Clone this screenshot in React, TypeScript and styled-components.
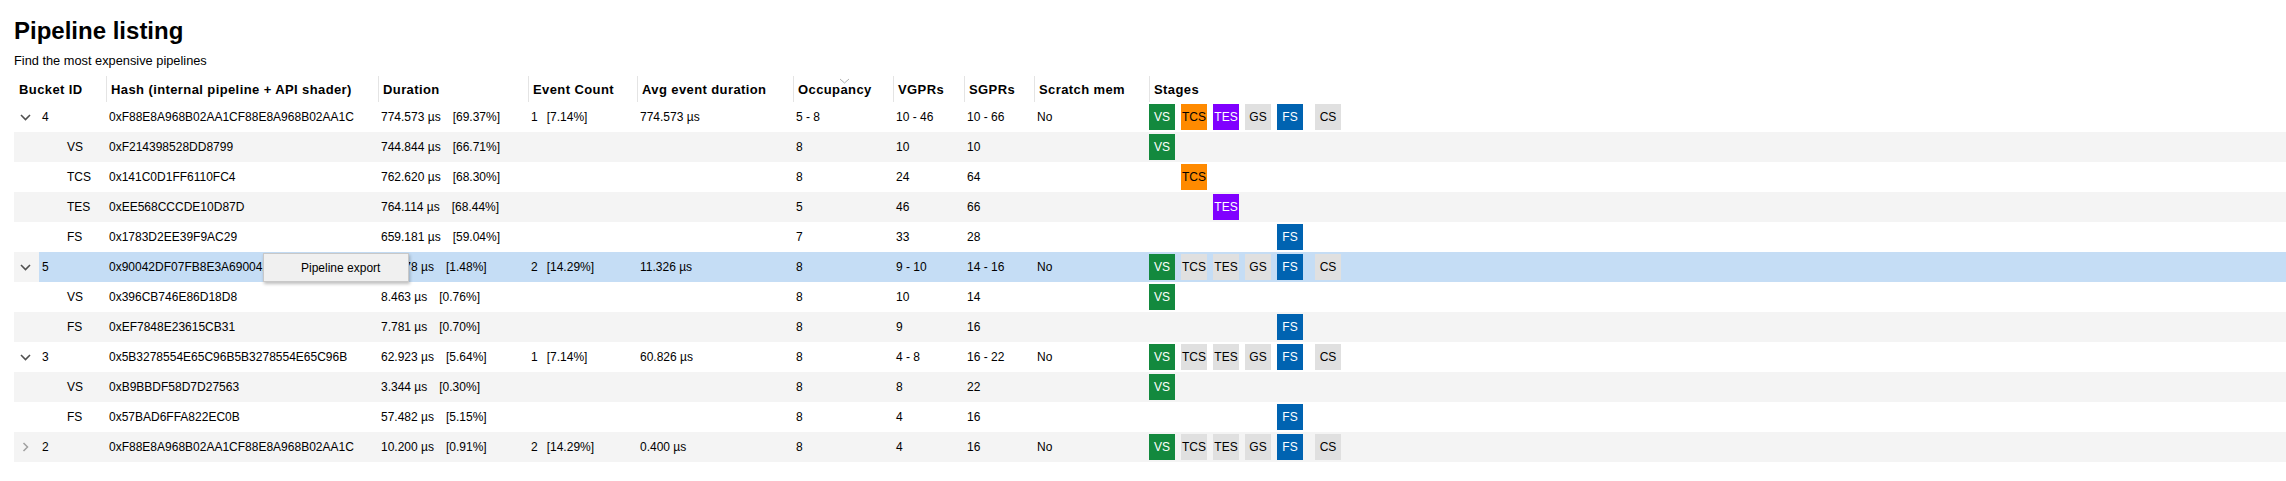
import React from "react";
import styled, { createGlobalStyle } from "styled-components";

const GlobalStyle = createGlobalStyle`
  html, body { margin: 0; padding: 0; background: #ffffff; }
  body { font-family: "Liberation Sans", Arial, sans-serif; color: #000; }
`;

const COLS = "92px 272px 150px 109px 156px 100px 71px 70px 115px 1fr";

const Page = styled.div`
  padding: 17px 0 0 14px;
  width: 2272px;
`;

const Title = styled.h1`
  margin: 0;
  font-size: 24px;
  line-height: 28px;
  font-weight: 700;
`;

const Subtitle = styled.p`
  margin: 8px 0 0 0;
  font-size: 12.8px;
  line-height: 16px;
`;

const Table = styled.div`
  margin-top: 7px;
  display: flex;
  flex-direction: column;
`;

const HeaderRow = styled.div`
  display: grid;
  grid-template-columns: ${COLS};
  height: 26px;
`;

const HeaderCell = styled.div<{ $first?: boolean }>`
  position: relative;
  display: flex;
  align-items: center;
  font-size: 13px;
  letter-spacing: 0.4px;
  font-weight: 700;
  padding-left: ${(p) => (p.$first ? "5px" : "4px")};
  border-left: ${(p) => (p.$first ? "none" : "1px solid #e4e4e4")};
  white-space: nowrap;
`;

const SortMark = styled.svg`
  position: absolute;
  left: 45px;
  top: 2px;
`;

const Row = styled.div<{ $alt: boolean }>`
  position: relative;
  display: grid;
  grid-template-columns: ${COLS};
  height: 30px;
  background: ${(p) => (p.$alt ? "#f4f4f4" : "#ffffff")};
`;

const SelectBand = styled.div`
  position: absolute;
  left: 25px;
  top: 0;
  right: 0;
  bottom: 0;
  background: #c5ddf5;
`;

const Cell = styled.div`
  position: relative;
  display: flex;
  align-items: center;
  padding-left: 3px;
  font-size: 12px;
  white-space: nowrap;
`;

const BucketCell = styled.div`
  position: relative;
  display: flex;
  align-items: center;
  font-size: 12px;
`;

const ArrowBox = styled.div`
  width: 11px;
  margin-left: 6px;
  display: flex;
  align-items: center;
  justify-content: center;
`;

const BucketNum = styled.span`
  margin-left: 11px;
`;

const ChildLabel = styled.span`
  margin-left: 53px;
`;

const Pct = styled.span<{ $gap: number }>`
  margin-left: ${(p) => p.$gap}px;
`;

const StagesCell = styled.div`
  position: relative;
  display: flex;
  align-items: center;
  gap: 6px;
`;

type StageKind = "vs" | "tcs" | "tes" | "fs" | "off" | "none";

const stageColors: Record<StageKind, { bg: string; fg: string }> = {
  vs: { bg: "#13893e", fg: "#ffffff" },
  tcs: { bg: "#ff8a00", fg: "#000000" },
  tes: { bg: "#8000ff", fg: "#ffffff" },
  fs: { bg: "#0063b1", fg: "#ffffff" },
  off: { bg: "#e0e0e0", fg: "#000000" },
  none: { bg: "transparent", fg: "transparent" },
};

const Badge = styled.div<{ $kind: StageKind; $extra?: boolean }>`
  width: 26px;
  height: 26px;
  display: flex;
  align-items: center;
  justify-content: center;
  font-size: 12px;
  background: ${(p) => stageColors[p.$kind].bg};
  color: ${(p) => stageColors[p.$kind].fg};
  visibility: ${(p) => (p.$kind === "none" ? "hidden" : "visible")};
  margin-left: ${(p) => (p.$extra ? "6px" : "0")};
`;

const Popup = styled.div`
  position: absolute;
  left: 249px;
  top: 1px;
  width: 146px;
  height: 29px;
  box-sizing: border-box;
  background: #f0f0f0;
  border: 1px solid #c8c8c8;
  box-shadow: 1px 2px 3px rgba(0, 0, 0, 0.25);
  display: flex;
  align-items: center;
  padding-left: 37px;
  font-size: 12px;
  z-index: 2;
`;

const STAGE_NAMES = ["VS", "TCS", "TES", "GS", "FS", "CS"];

type RowData = {
  bucket?: string;
  expanded?: boolean;
  child?: string;
  hash: string;
  dur: string;
  pct: string;
  evt?: string;
  evtPct?: string;
  avg?: string;
  occ: string;
  vgpr: string;
  sgpr: string;
  scratch?: string;
  stages: StageKind[];
  selected?: boolean;
};

const rows: RowData[] = [
  {
    bucket: "4", expanded: true, hash: "0xF88E8A968B02AA1CF88E8A968B02AA1C", dur: "774.573 µs", pct: "[69.37%]",
    evt: "1", evtPct: "[7.14%]", avg: "774.573 µs", occ: "5 - 8", vgpr: "10 - 46", sgpr: "10 - 66", scratch: "No",
    stages: ["vs", "tcs", "tes", "off", "fs", "off"],
  },
  { child: "VS", hash: "0xF214398528DD8799", dur: "744.844 µs", pct: "[66.71%]", occ: "8", vgpr: "10", sgpr: "10", stages: ["vs", "none", "none", "none", "none", "none"] },
  { child: "TCS", hash: "0x141C0D1FF6110FC4", dur: "762.620 µs", pct: "[68.30%]", occ: "8", vgpr: "24", sgpr: "64", stages: ["none", "tcs", "none", "none", "none", "none"] },
  { child: "TES", hash: "0xEE568CCCDE10D87D", dur: "764.114 µs", pct: "[68.44%]", occ: "5", vgpr: "46", sgpr: "66", stages: ["none", "none", "tes", "none", "none", "none"] },
  { child: "FS", hash: "0x1783D2EE39F9AC29", dur: "659.181 µs", pct: "[59.04%]", occ: "7", vgpr: "33", sgpr: "28", stages: ["none", "none", "none", "none", "fs", "none"] },
  {
    bucket: "5", expanded: true, selected: true, hash: "0x90042DF07FB8E3A690042DF07FB8E3A6", dur: "16.578 µs", pct: "[1.48%]",
    evt: "2", evtPct: "[14.29%]", avg: "11.326 µs", occ: "8", vgpr: "9 - 10", sgpr: "14 - 16", scratch: "No",
    stages: ["vs", "off", "off", "off", "fs", "off"],
  },
  { child: "VS", hash: "0x396CB746E86D18D8", dur: "8.463 µs", pct: "[0.76%]", occ: "8", vgpr: "10", sgpr: "14", stages: ["vs", "none", "none", "none", "none", "none"] },
  { child: "FS", hash: "0xEF7848E23615CB31", dur: "7.781 µs", pct: "[0.70%]", occ: "8", vgpr: "9", sgpr: "16", stages: ["none", "none", "none", "none", "fs", "none"] },
  {
    bucket: "3", expanded: true, hash: "0x5B3278554E65C96B5B3278554E65C96B", dur: "62.923 µs", pct: "[5.64%]",
    evt: "1", evtPct: "[7.14%]", avg: "60.826 µs", occ: "8", vgpr: "4 - 8", sgpr: "16 - 22", scratch: "No",
    stages: ["vs", "off", "off", "off", "fs", "off"],
  },
  { child: "VS", hash: "0xB9BBDF58D7D27563", dur: "3.344 µs", pct: "[0.30%]", occ: "8", vgpr: "8", sgpr: "22", stages: ["vs", "none", "none", "none", "none", "none"] },
  { child: "FS", hash: "0x57BAD6FFA822EC0B", dur: "57.482 µs", pct: "[5.15%]", occ: "8", vgpr: "4", sgpr: "16", stages: ["none", "none", "none", "none", "fs", "none"] },
  {
    bucket: "2", expanded: false, hash: "0xF88E8A968B02AA1CF88E8A968B02AA1C", dur: "10.200 µs", pct: "[0.91%]",
    evt: "2", evtPct: "[14.29%]", avg: "0.400 µs", occ: "8", vgpr: "4", sgpr: "16", scratch: "No",
    stages: ["vs", "off", "off", "off", "fs", "off"],
  },
];

const ChevronDown = () => (
  <svg width="11" height="7" viewBox="0 0 11 7">
    <path d="M1 1 L5.5 5.5 L10 1" fill="none" stroke="#505050" strokeWidth="1.6" />
  </svg>
);

const ChevronRight = () => (
  <svg width="7" height="10" viewBox="0 0 7 10">
    <path d="M1.5 1 L5.5 5 L1.5 9" fill="none" stroke="#a0a0a0" strokeWidth="1.5" />
  </svg>
);

const headers = [
  "Bucket ID",
  "Hash (internal pipeline + API shader)",
  "Duration",
  "Event Count",
  "Avg event duration",
  "Occupancy",
  "VGPRs",
  "SGPRs",
  "Scratch mem",
  "Stages",
];

export default function App() {
  return (
    <>
      <GlobalStyle />
      <Page>
        <Title>Pipeline listing</Title>
        <Subtitle>Find the most expensive pipelines</Subtitle>
        <Table>
          <HeaderRow>
            {headers.map((h, i) => (
              <HeaderCell key={h} $first={i === 0}>
                {h}
                {h === "Occupancy" && (
                  <SortMark width="11" height="6" viewBox="0 0 11 6">
                    <path d="M1 1 L5.5 5 L10 1" fill="none" stroke="#b0b0b0" strokeWidth="1" />
                  </SortMark>
                )}
              </HeaderCell>
            ))}
          </HeaderRow>
          {rows.map((r, i) => (
            <Row key={i} $alt={i % 2 === 1}>
              {r.selected && <SelectBand />}
              <BucketCell>
                {r.bucket !== undefined ? (
                  <>
                    <ArrowBox>{r.expanded ? <ChevronDown /> : <ChevronRight />}</ArrowBox>
                    <BucketNum>{r.bucket}</BucketNum>
                  </>
                ) : (
                  <ChildLabel>{r.child}</ChildLabel>
                )}
              </BucketCell>
              <Cell>{r.hash}</Cell>
              <Cell>
                {r.dur}
                <Pct $gap={12}>{r.pct}</Pct>
              </Cell>
              <Cell>
                {r.evt && (
                  <>
                    {r.evt}
                    <Pct $gap={9}>{r.evtPct}</Pct>
                  </>
                )}
              </Cell>
              <Cell>{r.avg}</Cell>
              <Cell>{r.occ}</Cell>
              <Cell>{r.vgpr}</Cell>
              <Cell>{r.sgpr}</Cell>
              <Cell>{r.scratch}</Cell>
              <StagesCell>
                {r.stages.map((s, si) => (
                  <Badge key={si} $kind={s} $extra={si === 5}>
                    {STAGE_NAMES[si]}
                  </Badge>
                ))}
              </StagesCell>
              {r.selected && <Popup>Pipeline export</Popup>}
            </Row>
          ))}
        </Table>
      </Page>
    </>
  );
}
